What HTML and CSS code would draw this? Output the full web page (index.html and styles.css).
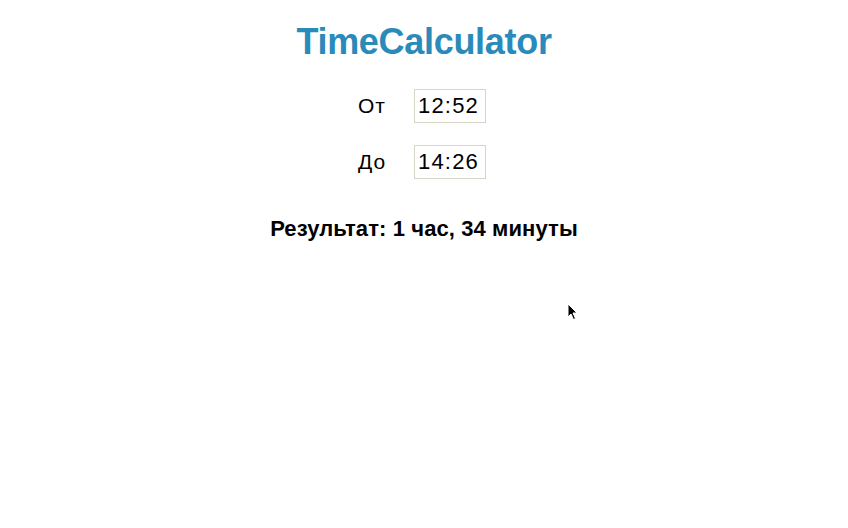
FILE: index.html
```html
<!DOCTYPE html>
<html lang="ru">
<head>
<meta charset="utf-8">
<title>TimeCalculator</title>
<link rel="stylesheet" href="styles.css">
</head>
<body>
<main class="app">
  <h1 class="title">TimeCalculator</h1>
  <div class="rows">
    <label class="row"><span class="label">От</span><input class="time" type="text" value="12:52"></label>
    <label class="row"><span class="label">До</span><input class="time" type="text" value="14:26"></label>
  </div>
  <p class="result">Результат: 1 час, 34 минуты</p>
</main>
<svg class="cursor" width="12" height="18" viewBox="0 0 12 18"><path d="M1 1 L1 14 L4 11 L6.5 16.5 L8.5 15.5 L6 10 L10 10 Z" fill="#000" stroke="#fff" stroke-width="1"/></svg>
</body>
</html>
```
FILE: styles.css
```css
html, body { margin: 0; padding: 0; background: #fff; }
body { font-family: "Liberation Sans", Arial, sans-serif; color: #000; width: 848px; height: 528px; position: relative; overflow: hidden; }
.app { display: flex; flex-direction: column; align-items: center; padding-top: 21px; }
.title { margin: 0; font-size: 36px; font-weight: bold; color: #2a8ab9; line-height: 42px; letter-spacing: -0.3px; }
.rows { display: flex; flex-direction: column; gap: 22px; margin-top: 26px; margin-left: -4px; }
.row { display: flex; align-items: center; gap: 26px; }
.label { font-size: 21px; width: 30px; letter-spacing: 1px; }
.time { width: 72px; height: 34px; box-sizing: border-box; border: 1px solid #d6d6c4; padding: 0 0 0 3px; font-family: "Liberation Sans", Arial, sans-serif; font-size: 22px; letter-spacing: 1.2px; color: #000; background: #fff; outline: none; }
.result { margin: 37px 0 0 0; font-size: 22px; font-weight: bold; line-height: 26px; letter-spacing: 0.1px; }
.cursor { position: absolute; left: 567px; top: 303px; }
```
